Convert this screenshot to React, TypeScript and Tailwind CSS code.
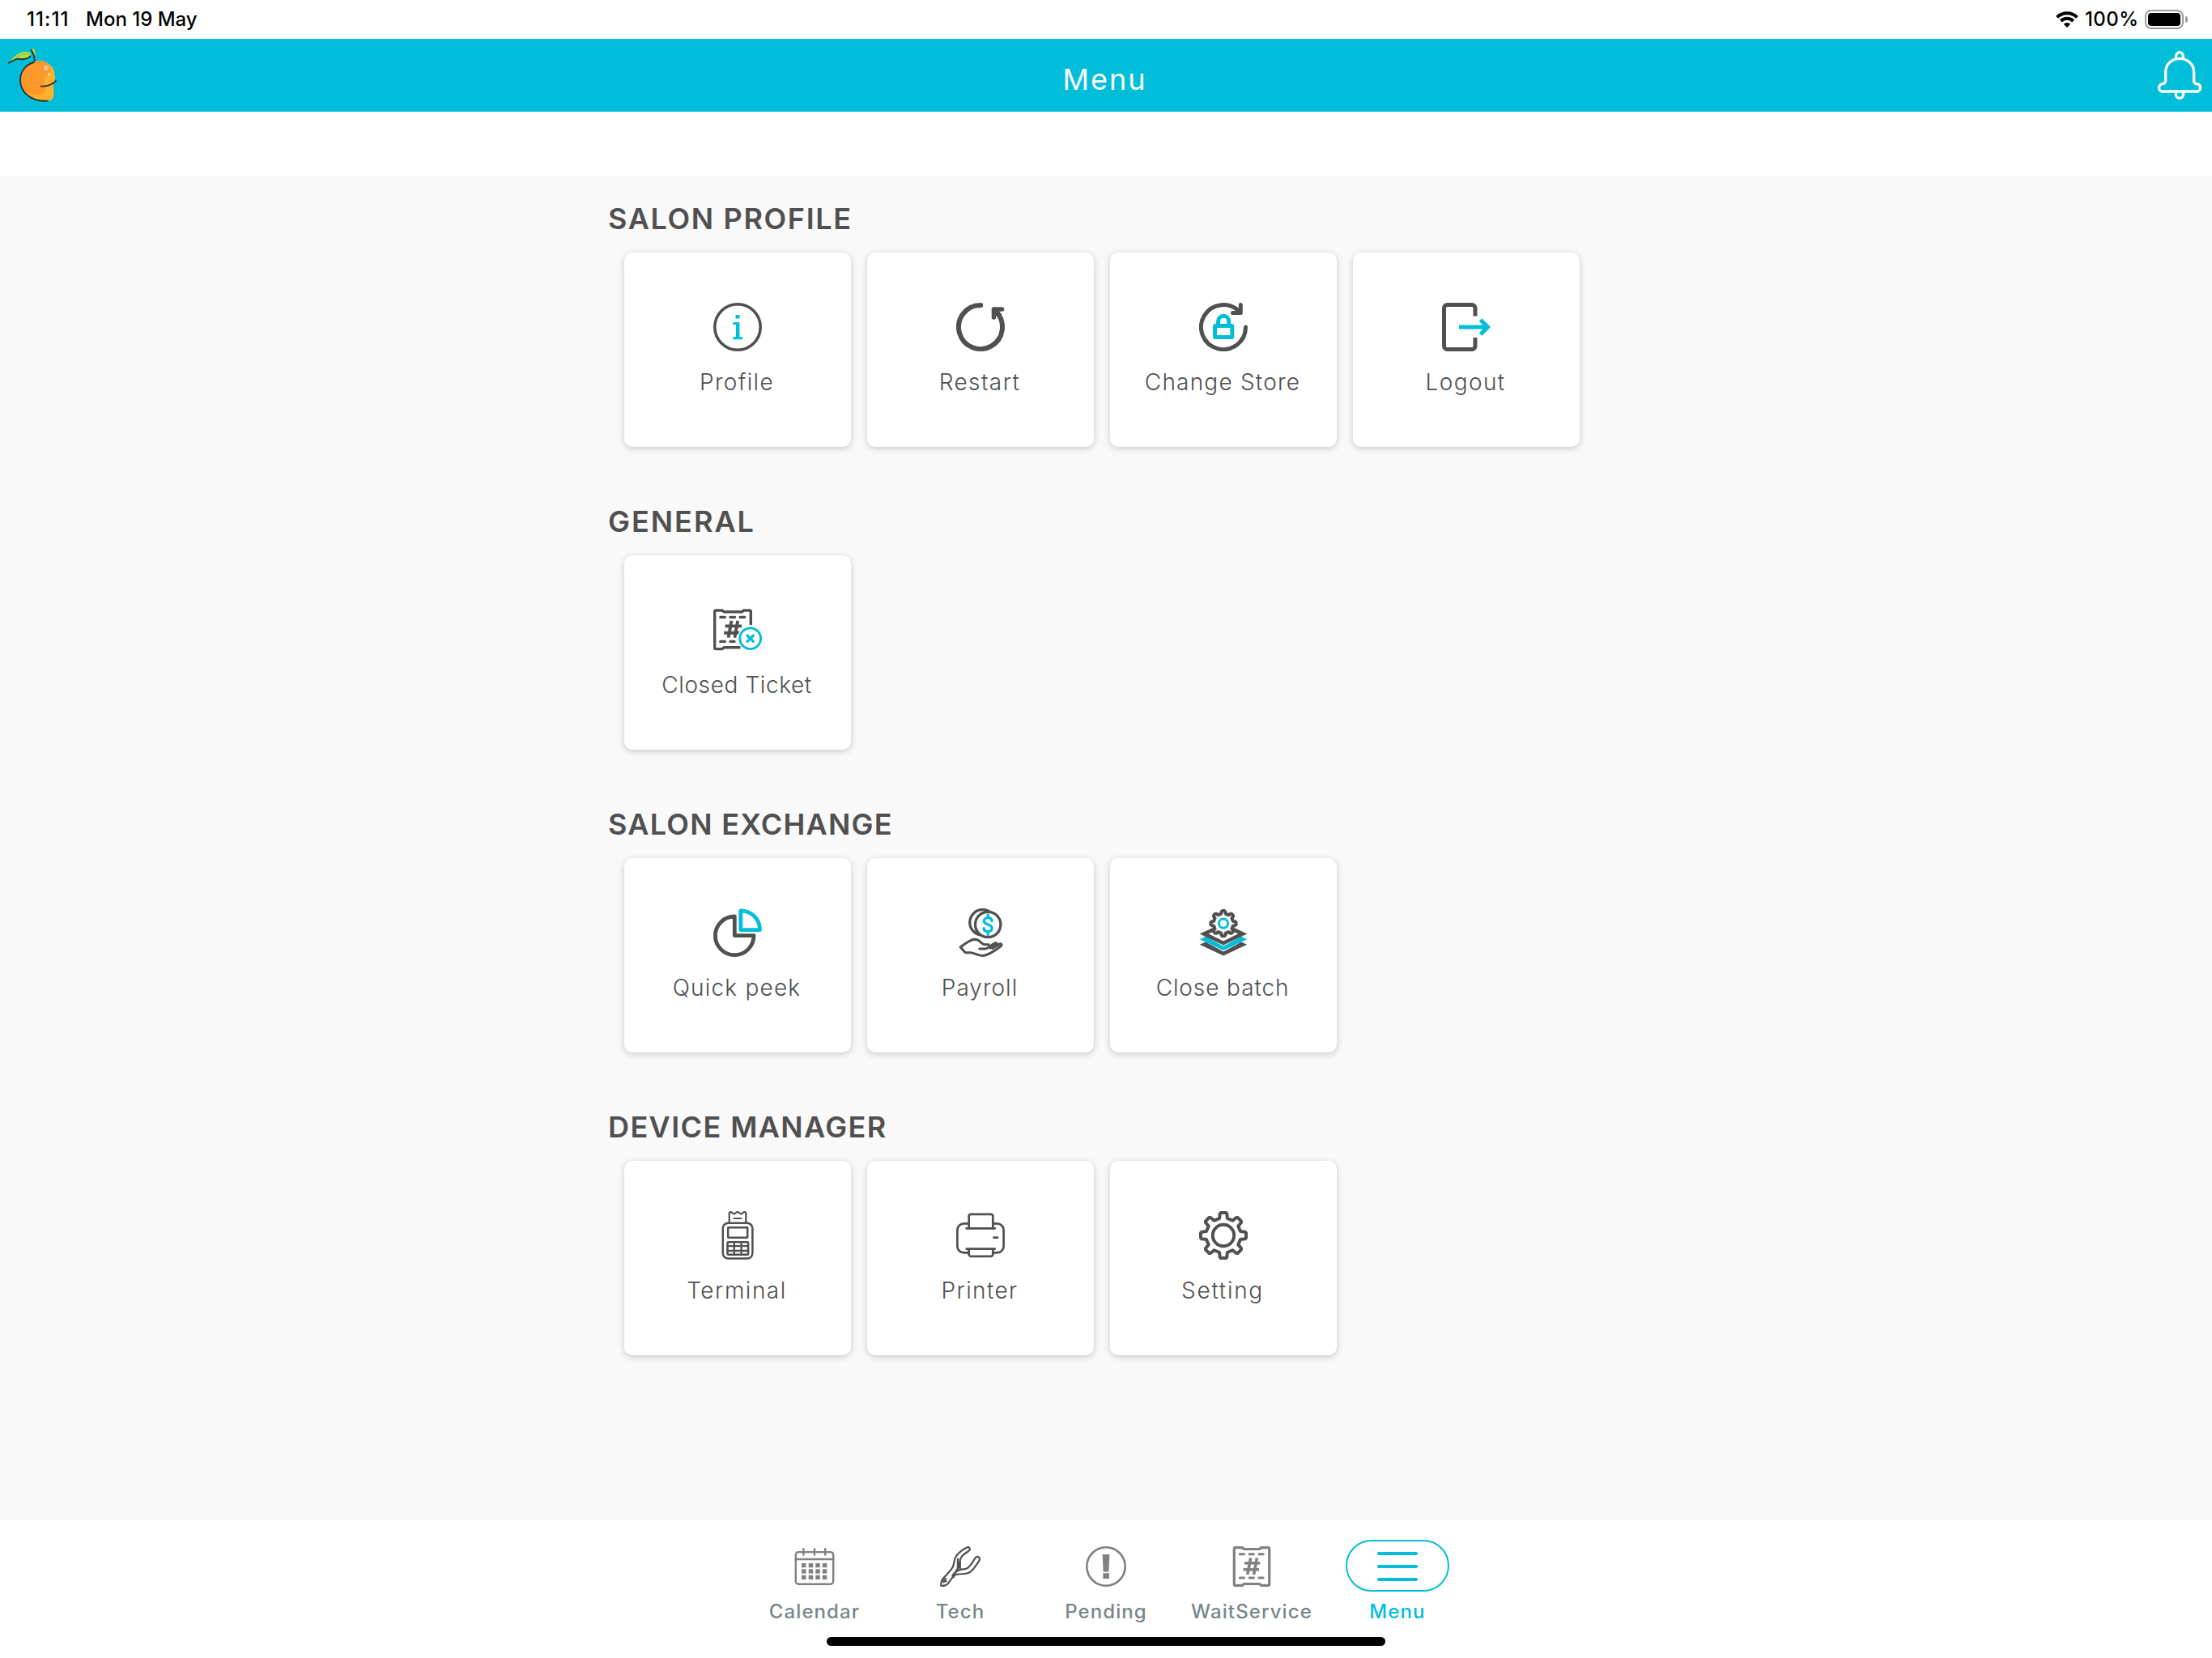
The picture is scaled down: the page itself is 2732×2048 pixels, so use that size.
import type { ReactNode } from "react";

const DARK = "#505050";
const CYAN = "#00bed9";
const GRAY = "#808080";

// Outline of an eight-toothed gear around (cx, cy)
function gearPath(cx: number, cy: number, tip: number, base: number, tipHalf: number, baseHalf: number): string {
  const local = [
    [-baseHalf, -base],
    [-tipHalf, -tip + 1.2],
    [-tipHalf + 1.2, -tip],
    [tipHalf - 1.2, -tip],
    [tipHalf, -tip + 1.2],
    [baseHalf, -base],
  ];
  const points: string[] = [];
  for (let i = 0; i < 8; i++) {
    const a = (i * Math.PI) / 4;
    for (const [x, y] of local) {
      const px = cx + x * Math.cos(a) - y * Math.sin(a);
      const py = cy + x * Math.sin(a) + y * Math.cos(a);
      points.push(`${px.toFixed(2)} ${py.toFixed(2)}`);
    }
  }
  return `M${points.join("L")}Z`;
}

interface IconProps {
  children: ReactNode;
  color?: string;
  width?: number;
}

function CardIcon({ children, color = DARK, width = 5 }: IconProps) {
  return (
    <svg
      className="h-[60px] w-[60px]"
      viewBox="0 0 60 60"
      fill="none"
      stroke={color}
      strokeWidth={width}
      strokeLinecap="round"
      strokeLinejoin="round"
    >
      {children}
    </svg>
  );
}

function TabIcon({ children, color = GRAY, width = 2.4 }: IconProps) {
  return (
    <svg
      className="h-[50px] w-[50px]"
      viewBox="0 0 50 50"
      fill="none"
      stroke={color}
      strokeWidth={width}
      strokeLinecap="round"
      strokeLinejoin="round"
    >
      {children}
    </svg>
  );
}

function ProfileIcon() {
  return (
    <CardIcon width={3.6}>
      <circle cx="30" cy="30" r="28.2" />
      <path d="M27.5 15h5v4.6h-5zM24.3 24h8.1v18.3H36v3H24.3v-3H28V27h-3.7z" fill={CYAN} stroke="none" />
    </CardIcon>
  );
}

function RestartIcon() {
  return (
    <CardIcon width={6}>
      <path d="M30.2 3A27 27 0 1 0 49 10.8" />
      <path d="M56.5 8H46.5V18" strokeWidth="5.6" />
      <path d="M47 8.5L53 15" />
    </CardIcon>
  );
}

function ChangeStoreIcon() {
  return (
    <CardIcon>
      <path d="M57.5 30A27.5 27.5 0 1 1 50 11.2" />
      <path d="M51.3 2.5V12.5H41.5" />
      <g stroke={CYAN} strokeLinejoin="miter">
        <rect x="19.5" y="28.5" width="21.3" height="14" rx="0.5" />
        <path d="M23.6 28V22.9a6.6 6.6 0 0 1 13.2 0V28" strokeLinecap="butt" />
      </g>
    </CardIcon>
  );
}

function LogoutIcon() {
  return (
    <CardIcon>
      <g strokeLinecap="butt">
        <path d="M41 16.6V6.5a4 4 0 0 0-4-4H6.5a4 4 0 0 0-4 4v47a4 4 0 0 0 4 4H37a4 4 0 0 0 4-4V43" />
        <path d="M21 30H57M47.5 21L56.5 30L47.5 39" stroke={CYAN} strokeLinejoin="miter" />
      </g>
    </CardIcon>
  );
}

function ClosedTicketIcon() {
  return (
    <CardIcon width={3.4}>
      <path d="M46.3 24V7.6q0-1.6-1.6-1.6h-7.4l-1.8 1.8H13.2L11.2 6H3.3Q1.7 6 1.7 7.6V52q0 1.6 1.6 1.6h7.9l2-1.8H33.5" strokeLinecap="butt" />
      <path d="M8.7 14.3h5.8M20.9 14.3h5.8M33 14.3h5.8M8.7 44.4h5.8M20.9 44.4h5.2" strokeWidth="3.2" />
      <path d="M22.4 18.8L18.6 39.6M30.2 18.8L26.4 39.6M14.6 25.4H35M13.2 33.8H33" strokeWidth="3.9" strokeLinecap="butt" />
      <circle cx="45.7" cy="40.7" r="15.8" fill="white" stroke="none" />
      <g stroke={CYAN}>
        <circle cx="45.7" cy="40.7" r="12.9" strokeWidth="2.8" />
        <path d="M42 37l7.4 7.4M49.4 37L42 44.4" strokeWidth="3.2" />
      </g>
    </CardIcon>
  );
}

function QuickPeekIcon() {
  return (
    <CardIcon width={4.8}>
      <path d="M26.3 10A23.8 23.8 0 1 0 50 33.7H26.3z" />
      <path d="M33.8 2.8A23.8 23.8 0 0 1 57.6 26.6H33.8z" stroke={CYAN} />
    </CardIcon>
  );
}

function PayrollIcon() {
  return (
    <CardIcon width={3.3}>
      <circle cx="32.5" cy="17.4" r="15.7" />
      <circle cx="39.2" cy="20" r="15.7" fill="white" />
      <path
        d="M44 15.6c0-3-2-4-4.8-4s-4.8 1.6-4.8 4.1c0 5.1 9.7 3.5 9.7 8.6 0 2.7-1.9 4.5-4.9 4.5s-5-1.6-5-4.2M39.2 8v3.4M39.2 29v3.4"
        stroke={CYAN}
        strokeWidth="3.4"
      />
      <path d="M28.8 50h7.2c2.5 0 3.8-1.7 5.5-3l5.8-3.8c2-1.2 3.7 0 2.6 1.6M40 44.8c-7 .2-8-1-10.8-4-3-2.8-7.5-2.8-11.2-1.2-5.5 2.5-9 5.5-12.8 8.4l6.2 6.7h6.6c5.4.8 10 3.8 15.2 3.8 6-.8 13-4.9 21.8-11.8 2-1.6.7-3.4-1.6-2.8l-8.2 5.4" strokeWidth="3" />
      <path d="M42.2 49.3l7.7-5" strokeWidth="2.6" />
    </CardIcon>
  );
}

function CloseBatchIcon() {
  return (
    <CardIcon width={4}>
      <g stroke="none">
        <path d="M.7 44.8L8 41.6L30 53.6L52 41.6L59.3 44.8L30 58.4Z" fill={DARK} />
        <path d="M.9 38.2L8 34.8L30 46.8L52 34.8L59.1 38.2L30 52Z" fill={CYAN} />
        <path d="M.7 31.4L18 23.4L20 27.6L11.7 31.4L30 40.4L48.3 31.4L40 27.6L42 23.4L59.3 31.4L30 45.6Z" fill={DARK} />
      </g>
      <path d={gearPath(30, 18.7, 15.6, 12, 2.5, 2.7)} fill="white" />
      <circle cx="30" cy="18.7" r="5.6" stroke={CYAN} strokeWidth="3" />
    </CardIcon>
  );
}

function TerminalIcon() {
  return (
    <CardIcon width={2.5}>
      <path d="M19.7 14V3Q19.7 1.2 21.4 1.2T24 2.6Q25.7 4.4 27.2 2.6Q28.4 1.2 30 1.2T32.8 2.6Q34.3 4.4 36 2.6Q37 1.2 38.6 1.2T40.3 3V14M25.4 9h8.8" strokeWidth="2.2" />
      <rect x="11.8" y="14.7" width="36.6" height="43.8" rx="6.5" />
      <rect x="18.2" y="20.3" width="24" height="12.5" rx="0.5" />
      <rect x="17.5" y="38.2" width="25.6" height="15.6" rx="1" />
      <path d="M25.8 38.2v15.6M34.6 38.2v15.6M17.5 43.2h25.6M17.5 49h25.6" strokeWidth="2.3" />
    </CardIcon>
  );
}

function PrinterIcon() {
  return (
    <CardIcon width={2.7}>
      <path d="M15.5 15.4H9.4a8 8 0 0 0-8 8v20a8 8 0 0 0 8 8h6.1M45.5 15.4h5.1a8 8 0 0 1 8 8v20a8 8 0 0 1-8 8h-5.1" />
      <path d="M15.7 21V6.1a2.2 2.2 0 0 1 2.2-2.2h25.2a2.2 2.2 0 0 1 2.2 2.2V21M15.7 47v6.6a2.2 2.2 0 0 0 2.2 2.2h25.2a2.2 2.2 0 0 0 2.2-2.2V47" />
      <path d="M12.7 21.4h35M12.7 46.7h35M46.5 32.7h4.5" />
    </CardIcon>
  );
}

function SettingIcon() {
  return (
    <CardIcon width={4}>
      <path d={gearPath(30, 30, 28, 21, 4.3, 4.9)} />
      <circle cx="30" cy="30" r="13.2" />
    </CardIcon>
  );
}

function CalendarIcon() {
  return (
    <TabIcon>
      <rect x="1.8" y="7.1" width="46.4" height="39.6" rx="3.4" />
      <path d="M1.8 16h46.4M11.4 3.2v7.3M25 3.2v7.3M38.2 3.2v7.3" />
      {[20.9, 28.3, 35.7].map((y) =>
        [9, 17.7, 26.3, 34.8].map((x) => (
          <rect key={`${x}-${y}`} x={x} y={y} width="5.5" height="5.3" fill={GRAY} stroke="none" />
        )),
      )}
    </TabIcon>
  );
}

function TechIcon() {
  return (
    <TabIcon color={DARK} width={2.2}>
      <path d="M33.2 1.4C27 4.4 22.6 8.4 20 12c-3.4 5-2.2 9.6-4.2 13.6-2.3 4.4-7.2 9-10.9 13C1.4 42 1 44.6 1.2 48.7c3.8.5 6.6 0 9-3.1 3.2-4.4 5.9-9.2 9.8-10.8 6-1.3 12.3.6 17.4-3.2 5-3.6 7.4-8.6 10.9-13.8 2.7-4-2.2-6.6-5-3-3.2 4.5-5.4 9.6-9.8 12.4-4.1 2-8 .3-11.9 3.3-2.6 2-5.6 3-6.3 5.7-.2 1.3.7 2.2 1.7 1.9M33.2 1.4c3-1.2 5 2.6 2.4 4.3-3.4 2.3-7 4.5-9.3 7.6-2.7 3.7-1.5 8-3.3 12.4-.9 2-2 3.2-3.4 5M21.9 15.5V28M24.8 16v11.6" />
      <path d="M3.5 42.5l3-3 1.2 2.3-3 3zM3.6 40.4l4.4 3.2" strokeWidth="1.6" />
    </TabIcon>
  );
}

function PendingIcon() {
  return (
    <TabIcon width={2.6}>
      <circle cx="25" cy="25" r="23.7" />
      <path d="M20.6 10h8.8l-1 21.4h-6.8zM21.3 33.2h7.6v6.8h-7.6z" fill={GRAY} stroke="none" />
    </TabIcon>
  );
}

function WaitServiceIcon() {
  return (
    <TabIcon width={3.2}>
      <path d="M4.9 1.6h8.5l2 1.9h19.2l2-1.9h8.5q1.6 0 1.6 1.6v43.6q0 1.6-1.6 1.6h-8.5l-2-1.9H15.4l-2 1.9H4.9q-1.6 0-1.6-1.6V3.2q0-1.6 1.6-1.6z" />
      <path d="M10.2 9.7h5.3M22.1 9.7h5.3M33.9 9.7h5.3M10.2 39h5.3M22.1 39h5.3M33.9 39h5.3" strokeWidth="3" />
      <path d="M23.6 14.3L19.8 35M31.4 14.3L27.6 35M16 20.8H35.2M14.6 28.7H34" strokeWidth="3.6" strokeLinecap="butt" />
    </TabIcon>
  );
}

function MenuIcon() {
  return (
    <TabIcon color={CYAN} width={4}>
      <path d="M2 9h46M2 25h46M2 41h46" />
    </TabIcon>
  );
}

function MangoLogo() {
  return (
    <svg className="h-[70px] w-16" viewBox="24 174 192 210" fill="none" strokeLinecap="round">
      <path d="M145 226C178 226 204 248 204 284C204 303 197 310 198 325C200 346 204 374 176 374C118 377 77 340 77 296C77 255 108 226 145 226Z" fill="#ffb02e" />
      <path d="M145 226C173 226 190 241 189 263C186 279 166 276 165 296C164 309 170 314 168 330C166 347 154 352 134 352C110 351 90 342 82 325C65 275 95 226 145 226Z" fill="#ff982b" />
      <path d="M33 233C50 207 75 190 96 191C106 192 112 194 114 199C113 215 87 220 66 218C52 221 42 228 33 233Z" fill="#b8d83c" />
      <path d="M58 212C74 203 92 198 112 199" stroke="#3cc9a0" strokeWidth="2" />
      <path d="M114 183L126 180C133 192 132 203 129 210Z" fill="#b8d83c" />
      <g stroke="#2b2f36" strokeWidth="5.5">
        <path d="M33 233C46 226 55 219 68 218C88 222 100 221 112 209" />
        <path d="M115 185C124 197 128 211 128 226" />
        <path d="M125 231C95 239 75 265 75 297C76 345 118 378 176 374" />
        <path d="M152 320C172 321 190 314 204 303M206.5 300h.5" />
      </g>
      <circle cx="171" cy="252" r="9.5" fill="#ffc09a" />
      <circle cx="183" cy="275" r="6" fill="#ffc87c" />
    </svg>
  );
}

function BellIcon() {
  return (
    <svg className="h-[64px] w-[58px]" viewBox="639 183 174 192" fill="none" stroke="white" strokeWidth="10">
      <path d="M674 300V268C674 238 697 217 726 217S779 238 779 268V300C779 307 784 310 790 311C807 313 807 338 790 339H662C646 338 646 313 662 311C669 310 674 307 674 300Z" />
      <path d="M713 217v-9a13 14 0 0 1 26 0v9M712 341v8a14 15 0 0 0 28 0v-8" strokeWidth="9.5" />
    </svg>
  );
}

function StatusBar() {
  return (
    <div className="flex h-12 items-center bg-white pr-[30px] pl-[33px] text-[24px] font-medium text-black">
      <span className="w-[73px] tracking-[1.1px]">11:11</span>
      <span>Mon 19 May</span>
      <svg className="ml-auto h-5 w-7" viewBox="0 0 28 20" fill="none" stroke="black" strokeWidth="4">
        <path d="M1.6 7.3a17.5 17.5 0 0 1 24.8 0" />
        <path d="M6.4 12a10.8 10.8 0 0 1 15.2 0" />
        <path d="M14 20l-4.2-4.3a6 6 0 0 1 8.4 0z" fill="black" stroke="none" />
      </svg>
      <span className="ml-2 w-[74px] tracking-[0.4px]">100%</span>
      <div className="h-6 w-12 rounded-lg border-2 border-[#9b9b9b] p-0.5">
        <div className="h-4 w-10 rounded-[4px] bg-black" />
      </div>
      <div className="ml-0.5 h-2 w-[3px] rounded-r-full bg-[#9b9b9b]" />
    </div>
  );
}

interface MenuItem {
  label: string;
  icon: ReactNode;
  tracking?: string;
}

interface MenuSection {
  title: string;
  tracking: string;
  items: MenuItem[];
}

const sections: MenuSection[] = [
  {
    title: "SALON PROFILE",
    tracking: "tracking-[1.65px]",
    items: [
      { label: "Profile", icon: <ProfileIcon />, tracking: "tracking-[1.3px]" },
      { label: "Restart", icon: <RestartIcon />, tracking: "tracking-[1.4px]" },
      { label: "Change Store", icon: <ChangeStoreIcon />, tracking: "tracking-[1.2px]" },
      { label: "Logout", icon: <LogoutIcon />, tracking: "tracking-[1.4px]" },
    ],
  },
  {
    title: "GENERAL",
    tracking: "tracking-[2px]",
    items: [{ label: "Closed Ticket", icon: <ClosedTicketIcon />, tracking: "tracking-[0.6px]" }],
  },
  {
    title: "SALON EXCHANGE",
    tracking: "tracking-[1.25px]",
    items: [
      { label: "Quick peek", icon: <QuickPeekIcon />, tracking: "tracking-[1.2px]" },
      { label: "Payroll", icon: <PayrollIcon />, tracking: "tracking-[1px]" },
      { label: "Close batch", icon: <CloseBatchIcon />, tracking: "tracking-[0.9px]" },
    ],
  },
  {
    title: "DEVICE MANAGER",
    tracking: "tracking-[1.4px]",
    items: [
      { label: "Terminal", icon: <TerminalIcon />, tracking: "tracking-[1.5px]" },
      { label: "Printer", icon: <PrinterIcon />, tracking: "tracking-[1.4px]" },
      { label: "Setting", icon: <SettingIcon />, tracking: "tracking-[1.7px]" },
    ],
  },
];

const tabs: MenuItem[] = [
  { label: "Calendar", icon: <CalendarIcon /> },
  { label: "Tech", icon: <TechIcon /> },
  { label: "Pending", icon: <PendingIcon /> },
  { label: "WaitService", icon: <WaitServiceIcon /> },
  { label: "Menu", icon: <MenuIcon /> },
];

function MenuCard({ label, icon, tracking }: MenuItem) {
  return (
    <button className="flex h-60 w-70 flex-col items-center rounded-[10px] bg-white pt-[62px] shadow-[0_2px_8px_rgba(0,0,0,0.2)]">
      {icon}
      <span className={`mt-5 mr-0.5 text-[28px] leading-9 font-[350] whitespace-nowrap text-[#505050] ${tracking}`}>
        {label}
      </span>
    </button>
  );
}

function TabBar({ active }: { active: string }) {
  return (
    <nav className="flex h-[170px] flex-col items-center bg-white pt-6">
      <div className="flex">
        {tabs.map((tab) => (
          <button key={tab.label} className="flex w-45 flex-col items-center">
            <span
              className={`flex h-16 w-32 items-center justify-center rounded-full border-2 pt-0.5 ${
                tab.label === active ? "border-[#00bed9]" : "border-transparent"
              }`}
            >
              {tab.icon}
            </span>
            <span
              className={`mt-[9px] text-[24px] leading-8 font-medium tracking-[1.1px] ${
                tab.label === active ? "text-[#00bed9]" : "text-[#77878a]"
              }`}
            >
              {tab.label}
            </span>
          </button>
        ))}
      </div>
      <div className="mt-[15px] h-[11px] w-[690px] rounded-full bg-black" />
    </nav>
  );
}

export default function App() {
  return (
    <div className="flex h-[2048px] w-[2732px] flex-col overflow-hidden bg-white font-['Inter',sans-serif]">
      <StatusBar />
      <header className="flex h-[90px] items-center justify-between bg-[#00bed9] pr-[11px] pl-2">
        <div className="w-20">
          <MangoLogo />
        </div>
        <h1 className="pt-2.5 text-[36px] tracking-[2px] text-white">Menu</h1>
        <div className="flex w-20 justify-end">
          <BellIcon />
        </div>
      </header>
      <div className="h-20" />
      <main className="flex-1 bg-[#f9f9f9] pl-[751px]">
        {sections.map((section) => (
          <section key={section.title} className="h-[374px]">
            <h2 className={`h-[94px] pt-[30px] text-[36px] leading-[45px] font-semibold text-[#505050] ${section.tracking}`}>
              {section.title}
            </h2>
            <div className="flex gap-5 pl-5">
              {section.items.map((item) => (
                <MenuCard key={item.label} {...item} />
              ))}
            </div>
          </section>
        ))}
      </main>
      <TabBar active="Menu" />
    </div>
  );
}
